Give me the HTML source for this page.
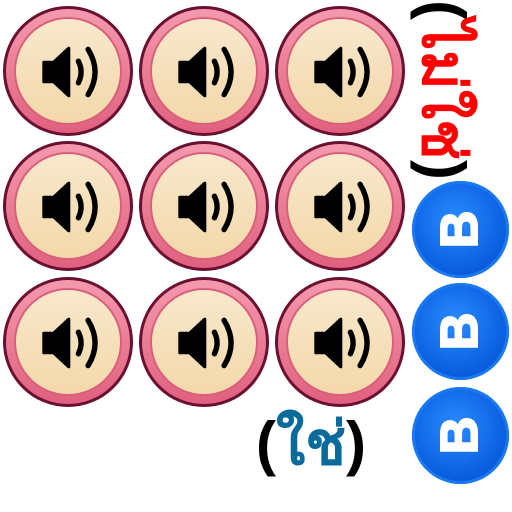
<!DOCTYPE html>
<html><head><meta charset="utf-8"><style>
body{margin:0;width:512px;height:512px;background:#fff;position:relative;overflow:hidden;font-family:"Liberation Sans","Noto Sans CJK SC",sans-serif}
.s{position:absolute;width:130px;height:130px;border-radius:50%;box-sizing:border-box;border:3px solid #6a1030;background:linear-gradient(#f59aae,#e0607f);}
.s::before{content:"";position:absolute;left:10px;top:10px;right:10px;bottom:10px;border-radius:50%;background:linear-gradient(#f8e8cc,#f3d8aa);box-shadow:0 0 0 2px #d8607a}
.s svg{position:absolute;left:34px;top:35px}
.b{position:absolute;width:97px;height:97px;border-radius:50%;background:radial-gradient(circle at 45% 40%,#2a8cff,#0a5ee0 65%,#0048c0);box-shadow:inset 0 0 0 3px #1a78f0}
.b span{position:absolute;left:0;top:0;width:97px;height:97px;line-height:97px;text-align:center;color:#fff;font-weight:900;font-size:52px;transform:rotate(-90deg);-webkit-text-stroke:2px #fff}
</style></head><body>
<div id="g"></div>
<script>
var xs=[68,204,340],ys=[71,206,342],h='';
var sp='<svg width="66" height="56" viewBox="0 0 60 52"><path d="M3 17h9l14-13v44L12 35H3z" fill="#000" stroke="#000" stroke-width="3" stroke-linejoin="round"/><path d="M35 16q5 10 0 20" fill="none" stroke="#000" stroke-width="5" stroke-linecap="round"/><path d="M44 5q13 21 0 42" fill="none" stroke="#000" stroke-width="5" stroke-linecap="round"/></svg>';
ys.forEach(function(y){xs.forEach(function(x){h+='<div class="s" style="left:'+(x-65)+'px;top:'+(y-65)+'px">'+sp+'</div>';});});
[229,331,435].forEach(function(y){h+='<div class="b" style="left:412px;top:'+(y-48)+'px"><span>B</span></div>';});
document.getElementById('g').innerHTML=h;
</script>
<div style="position:absolute;left:256px;top:404px;font-size:60px;font-weight:bold;line-height:80px"><span>(</span><span style="color:#0a6a9a">ใช่</span><span>)</span></div>
<div style="position:absolute;left:353px;top:54px;width:180px;height:72px;transform:rotate(90deg);font-size:60px;font-weight:bold;line-height:72px;text-align:center;white-space:nowrap"><span>(</span><span style="color:#f00">ไม่ใช่</span><span>)</span></div>
</body></html>
